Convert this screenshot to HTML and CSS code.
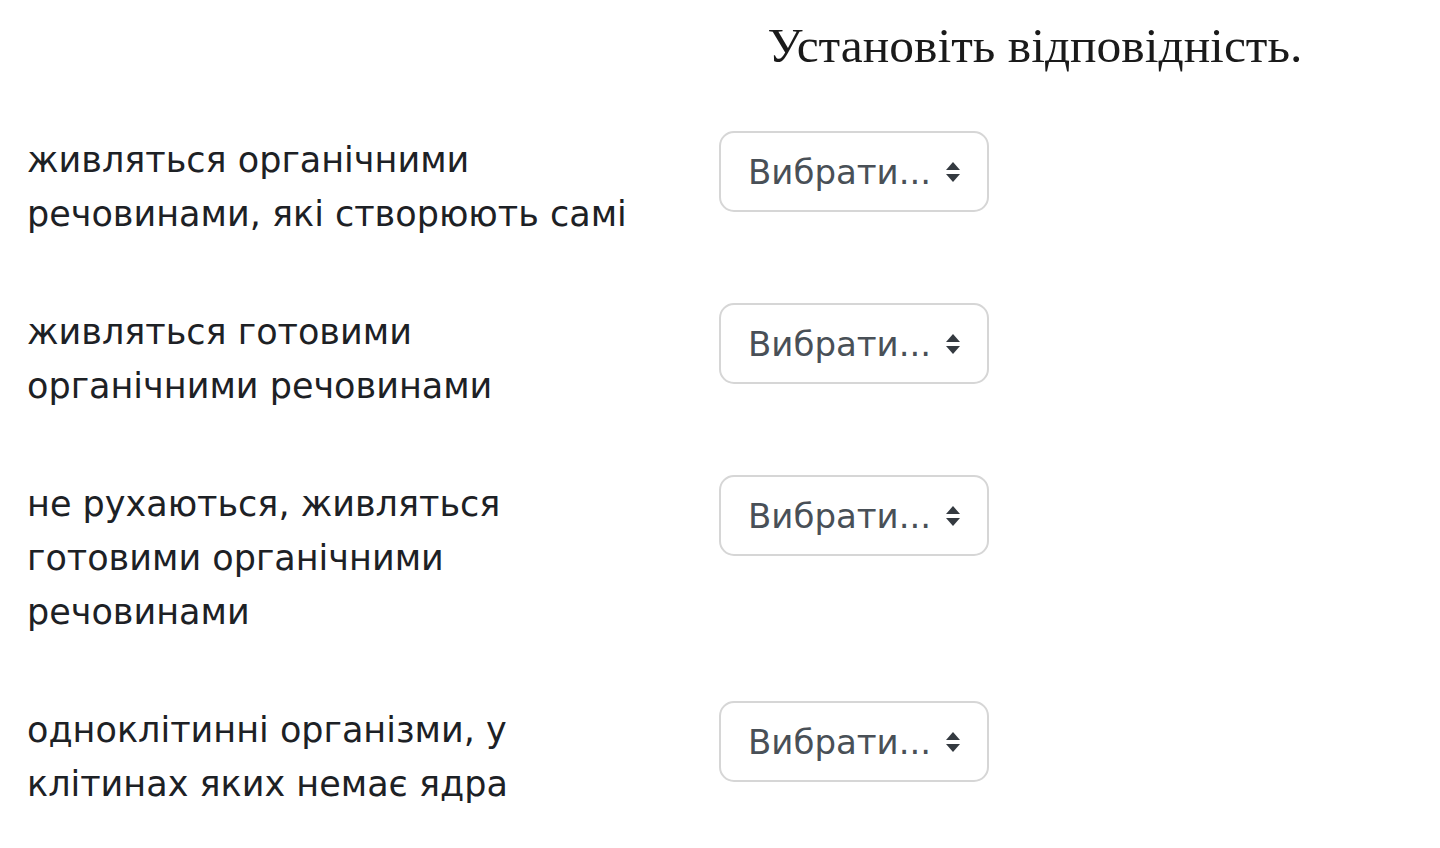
FILE: index.html
```html
<!DOCTYPE html>
<html lang="uk">
<head>
  <meta charset="UTF-8" />
  <meta name="viewport" content="width=device-width, initial-scale=1.0" />
  <title>Установіть відповідність</title>
  <link rel="stylesheet" href="styles.css">
</head>
<body>
  <div class="prompt">
    <h1>Установіть відповідність.</h1>
  </div>

  <div class="matches">
    <div class="row">
      <div class="label">живляться органічними речовинами, які створюють самі</div>
      <div class="select">
        <span>Вибрати...</span>
        <svg width="16" height="22" viewBox="0 0 16 22"><path d="M8 1 L15 9 H1 Z M8 21 L15 13 H1 Z" fill="#343a40"/></svg>
      </div>
    </div>
    <div class="row">
      <div class="label">живляться готовими органічними речовинами</div>
      <div class="select">
        <span>Вибрати...</span>
        <svg width="16" height="22" viewBox="0 0 16 22"><path d="M8 1 L15 9 H1 Z M8 21 L15 13 H1 Z" fill="#343a40"/></svg>
      </div>
    </div>
    <div class="row">
      <div class="label">не рухаються, живляться готовими органічними речовинами</div>
      <div class="select">
        <span>Вибрати...</span>
        <svg width="16" height="22" viewBox="0 0 16 22"><path d="M8 1 L15 9 H1 Z M8 21 L15 13 H1 Z" fill="#343a40"/></svg>
      </div>
    </div>
    <div class="row">
      <div class="label">одноклітинні організми, у клітинах яких немає ядра</div>
      <div class="select">
        <span>Вибрати...</span>
        <svg width="16" height="22" viewBox="0 0 16 22"><path d="M8 1 L15 9 H1 Z M8 21 L15 13 H1 Z" fill="#343a40"/></svg>
      </div>
    </div>
  </div>
</body>
</html>
```

FILE: styles.css
```css
body {
  margin: 0;
  background: #fff;
  color: #1d2125;
  font-family: "DejaVu Sans", sans-serif;
}

.prompt {
  padding: 18px 0 0 630px;
  text-align: center;
}

.prompt h1 {
  margin: 0;
  font-family: "Liberation Serif", serif;
  font-weight: normal;
  font-size: 49.5px;
  line-height: 55px;
  color: #1a1a1a;
}

.matches {
  padding: 59px 0 0 27px;
  display: flex;
  flex-direction: column;
  gap: 63px;
}

.row {
  display: grid;
  grid-template-columns: 692px 270px;
  align-items: start;
}

.label {
  width: 612px;
  padding-top: 1px;
  font-size: 35px;
  line-height: 54px;
}

.select {
  box-sizing: border-box;
  height: 81px;
  margin-top: -1px;
  padding: 0 26px 0 27px;
  border: 2px solid #d6d6d6;
  border-radius: 15px;
  display: flex;
  align-items: center;
  justify-content: space-between;
  color: #495057;
  font-size: 34px;
}
```
